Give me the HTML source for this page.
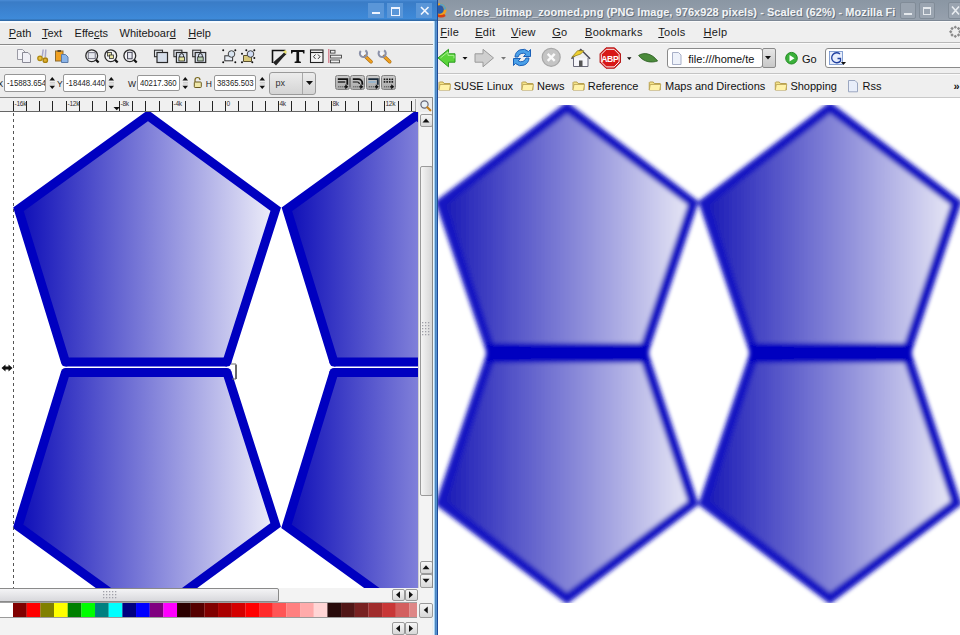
<!DOCTYPE html>
<html><head><meta charset="utf-8">
<style>
*{box-sizing:border-box}
html,body{margin:0;padding:0;width:960px;height:635px;overflow:hidden;background:#fff;font-family:"Liberation Sans",sans-serif;font-size:11px;color:#1a1a1a}
.a{position:absolute}
.t{position:absolute;white-space:nowrap}
.u{text-decoration:underline;text-underline-offset:1px}
.sep{position:absolute;height:1px;background:#8a8a8a}
.inp{position:absolute;background:#fff;border:1px solid #969696;border-radius:2px;overflow:hidden;white-space:nowrap}
.btn{position:absolute;border:1px solid #8f8f8f;border-radius:2px;background:linear-gradient(#f4f4f4,#dedede)}
svg{position:absolute;overflow:visible}
</style></head><body>

<div class="a" style="left:0;top:0;width:438px;height:635px;background:#ececec;overflow:hidden">
<div class="a" style="left:0;top:0;width:438px;height:21px;background:linear-gradient(#4b8cd6 0,#3a7cc6 2px,#3c84d2 12px,#3e8ad9 19px,#2f6aa8 20px,#2f6aa8 21px)"></div>
<div class="a" style="left:368px;top:3px;width:16px;height:15px;background:#5a96d8"></div>
<div class="a" style="left:387px;top:3px;width:16px;height:15px;background:#5a96d8"></div>
<div class="a" style="left:416px;top:3px;width:16px;height:15px;background:#5a96d8"></div>
<div class="a" style="left:372px;top:12px;width:8px;height:2px;background:#eef4ff"></div>
<div class="a" style="left:391px;top:7px;width:8.5px;height:8.5px;border:1.2px solid #eef4ff;border-top-width:2px"></div>
<svg style="left:420px;top:6px" width="9" height="9"><path d="M1 1L8.5 8.5M8.5 1L1 8.5" stroke="#f4f8ff" stroke-width="1.6"/></svg>
<div class="a" style="left:0;top:21px;width:434px;height:2px;background:#f7fbff"></div>
<div class="t " style="left:8.75px;top:28.44px;font-size:11px;line-height:11px;"><span class="u">P</span>ath</div>
<div class="t " style="left:41.9px;top:28.44px;font-size:11px;line-height:11px;"><span class="u">T</span>ext</div>
<div class="t " style="left:74.6px;top:28.44px;font-size:11px;line-height:11px;">Effe<span class="u">c</span>ts</div>
<div class="t " style="left:119.5px;top:28.44px;font-size:11px;line-height:11px;">Whiteboar<span class="u">d</span></div>
<div class="t " style="left:188.2px;top:28.44px;font-size:11px;line-height:11px;"><span class="u">H</span>elp</div>
<div class="sep" style="left:0;top:44px;width:434px"></div>
<div class="a" style="left:0;top:45px;width:434px;height:1px;background:#fafafa"></div>
<div class="sep" style="left:0;top:67px;width:434px"></div>
<div class="a" style="left:0;top:68px;width:434px;height:1px;background:#fafafa"></div>
<div class="sep" style="left:0;top:97px;width:434px"></div>
<svg style="left:16px;top:48px" width="16" height="16" viewBox="16 48 16 16"><path d="M17.5 49.5h5l2.5 2.5v7.5h-7.5z" fill="#f4f4f8" stroke="#9a9aa4"/><path d="M22.5 52.5h5.5l2.5 2.5v7.5h-8z" fill="#f0f0f6" stroke="#8a8a96"/></svg>
<svg style="left:35px;top:48px" width="16" height="16" viewBox="35 48 16 16"><path d="M43.2 49.5l-1 7M45.8 49.5l-.5 7.5" stroke="#a8a8c8" stroke-width="1.5"/><circle cx="40" cy="58.3" r="2.2" fill="#e8c040" stroke="#b08a10" stroke-width="1.3"/><circle cx="45.3" cy="60.2" r="2.2" fill="#e0b030" stroke="#a88010" stroke-width="1.3"/></svg>
<svg style="left:54px;top:48px" width="16" height="16" viewBox="54 48 16 16"><rect x="55.5" y="51" width="7.5" height="10" fill="#f0a020" stroke="#8a6a30"/><rect x="57.5" y="50" width="3.5" height="2" fill="#5a4a30"/><path d="M61.5 54.5h4l2.5 2.5v5.5h-6.5z" fill="#8ab4e8" stroke="#5a7aa8"/></svg>
<svg style="left:84px;top:47px" width="18" height="18" viewBox="84 47 18 18"><circle cx="91.7" cy="55.7" r="5.9" fill="#f4f4f6" stroke="#2a2a2a" stroke-width="1.3"/><rect x="88.2" y="52.7" width="7" height="6" fill="#e6e8ee" stroke="#556" stroke-width=".8"/><path d="M96.0 59.9l2.6 2.6" stroke="#111" stroke-width="2.2"/></svg>
<svg style="left:103px;top:47px" width="18" height="18" viewBox="103 47 18 18"><circle cx="110.75" cy="55.7" r="5.9" fill="#f4f4f6" stroke="#2a2a2a" stroke-width="1.3"/><rect x="107.5" y="52.5" width="4" height="3.5" fill="#e8e4b0" stroke="#333" stroke-width=".8"/><rect x="109.5" y="55" width="4" height="3.5" fill="#e8e4a0" stroke="#333" stroke-width=".8"/><path d="M115.05 59.9l2.6 2.6" stroke="#111" stroke-width="2.2"/></svg>
<svg style="left:122px;top:47px" width="18" height="18" viewBox="122 47 18 18"><circle cx="129.8" cy="55.7" r="5.9" fill="#f4f4f6" stroke="#2a2a2a" stroke-width="1.3"/><rect x="127.6" y="52.3" width="4.5" height="6.5" fill="#e8eaf2" stroke="#334" stroke-width=".9"/><path d="M134.10000000000002 59.9l2.6 2.6" stroke="#111" stroke-width="2.2"/></svg>
<svg style="left:153px;top:48px" width="17" height="17" viewBox="153 48 17 17"><rect x="154.5" y="50.2" width="8" height="6.5" fill="#e6eaf0" stroke="#333" stroke-width="1.1"/><rect x="157" y="52.5" width="10.5" height="10" fill="#d6deea" stroke="#2a2a2a" stroke-width="1.2"/></svg>
<svg style="left:172px;top:48px" width="17" height="17" viewBox="172 48 17 17"><rect x="173.9" y="50.2" width="8" height="6.5" fill="#e6eaf0" stroke="#333" stroke-width="1.1"/><rect x="176.4" y="52.5" width="10.5" height="10" fill="#d6deea" stroke="#2a2a2a" stroke-width="1.2"/><path d="M179.70000000000002 57v-1.5a1.9 1.9 0 0 1 3.8 0v1.5" fill="none" stroke="#222" stroke-width="1"/><rect x="178.9" y="57" width="5.5" height="4" fill="#e6e6a0" stroke="#222" stroke-width=".8"/></svg>
<svg style="left:191px;top:48px" width="17" height="17" viewBox="191 48 17 17"><rect x="192.7" y="50.2" width="8" height="6.5" fill="#e6eaf0" stroke="#333" stroke-width="1.1"/><rect x="195.2" y="52.5" width="10.5" height="10" fill="#d6deea" stroke="#2a2a2a" stroke-width="1.2"/><path d="M198.5 57v-1.5a1.9 1.9 0 0 1 3.8 0v1.5" fill="none" stroke="#222" stroke-width="1"/><rect x="197.7" y="57" width="5.5" height="4" fill="#b8d0b0" stroke="#222" stroke-width=".8"/></svg>
<svg style="left:221px;top:48px" width="17" height="17" viewBox="221 48 17 17"><circle cx="223.2" cy="50.2" r="1" fill="#111"/><circle cx="235.3" cy="50.2" r="1" fill="#111"/><circle cx="223.2" cy="62.25" r="1" fill="#111"/><circle cx="235.3" cy="62.25" r="1" fill="#111"/><rect x="224.8" y="55.8" width="7.8" height="5" fill="#e6ecf4" stroke="#333" stroke-width="1"/><circle cx="231.5" cy="54" r="3.3" fill="#d8e4f0" stroke="#444" stroke-width="1"/></svg>
<svg style="left:240px;top:48px" width="17" height="17" viewBox="240 48 17 17"><path d="M243.5 55.5h8v6h-8z" fill="#d8c878" stroke="#5a5030" stroke-width="1"/><circle cx="250.5" cy="54" r="3.3" fill="#d0dcf4" stroke="#444" stroke-width="1"/><circle cx="246.3" cy="50.2" r="1" fill="#111"/><circle cx="254.3" cy="50.2" r="1" fill="#111"/><circle cx="242" cy="53.75" r="1" fill="#111"/><circle cx="254.3" cy="58" r="1" fill="#111"/><circle cx="242" cy="62.25" r="1" fill="#111"/><circle cx="252.3" cy="62.25" r="1" fill="#111"/></svg>
<svg style="left:271px;top:48px" width="17" height="17" viewBox="271 48 17 17"><path d="M272.5 63V50.5h13" fill="none" stroke="#111" stroke-width="1.6"/><path d="M273 62.5l8.5-7.5 3-3 2 2-3 3-7.5 8.5z" fill="#222"/><path d="M283 51.5l2.5-1.5 1.5 2-1.5 2z" fill="#e8e070"/></svg>
<svg style="left:290px;top:48px" width="16" height="16" viewBox="290 48 16 16"><path d="M291 50h13.5v3.6h-1.2l-.6-1.6h-3.6v9.2l1.8.5V63h-6.3v-1.3l1.8-.5v-9.2h-3.6l-.6 1.6H291z" fill="#111"/></svg>
<svg style="left:309px;top:48px" width="16" height="16" viewBox="309 48 16 16"><rect x="310.5" y="50" width="12.5" height="12.5" fill="#f4f4f4" stroke="#222" stroke-width="1.1"/><path d="M310.5 52.5h12.5" stroke="#222" stroke-width="1.1"/><path d="M315.5 54.5l-2 2.2 2 2.2M318 54.5l2 2.2-2 2.2" fill="none" stroke="#333" stroke-width="1"/></svg>
<svg style="left:327px;top:48px" width="16" height="16" viewBox="327 48 16 16"><path d="M328.8 49v14" stroke="#d07080" stroke-width="1.2"/><rect x="330.5" y="50.3" width="4.5" height="2.8" fill="#eee" stroke="#444" stroke-width=".9"/><rect x="330.5" y="55.2" width="11" height="2.8" fill="#eee" stroke="#444" stroke-width=".9"/><rect x="330.5" y="60" width="9" height="2.8" fill="#eee" stroke="#444" stroke-width=".9"/></svg>
<svg style="left:357px;top:47px" width="18" height="18" viewBox="357 47 18 18"><path d="M365.5 56.5l5.5 5.2" stroke="#a86a10" stroke-width="3.6" stroke-linecap="round"/><path d="M365.5 56.5l5.5 5.2" stroke="#f0a020" stroke-width="2.4" stroke-linecap="round"/><path d="M360.8 51a3.6 3.6 0 1 0 4.6 -0.6" fill="none" stroke="#8a90a8" stroke-width="2"/><circle cx="363" cy="53.7" r="1.8" fill="#f4f6fc"/></svg>
<svg style="left:376px;top:47px" width="18" height="18" viewBox="376 47 18 18"><path d="M384.2 56.5l5.5 5.2" stroke="#a86a10" stroke-width="3.6" stroke-linecap="round"/><path d="M384.2 56.5l5.5 5.2" stroke="#f0a020" stroke-width="2.4" stroke-linecap="round"/><path d="M379.5 51a3.6 3.6 0 1 0 4.6 -0.6" fill="none" stroke="#8a90a8" stroke-width="2"/><circle cx="381.7" cy="53.7" r="1.8" fill="#f4f6fc"/></svg>
<div class="t " style="left:-2.5px;top:80.30px;font-size:8.5px;line-height:8.5px;color:#222">X</div>
<div class="inp" style="left:4px;top:74px;width:42px;height:18px"><div class="t" style="left:2px;top:2.48px;font-size:9px;line-height:12px;transform:scaleX(.86);transform-origin:0 0;color:#222">-15883.654</div></div>
<svg style="left:48.5px;top:76px" width="8" height="14" viewBox="48.5 76 8 14"><path d="M49.0 80.5l2.75-3.5 2.75 3.5z" fill="#111"/><path d="M49.0 85.8l2.75 3.2 2.75-3.2z" fill="#111"/><path d="M49.5 82.5h5M49.5 84h5" stroke="#c8c8c8" stroke-width=".8"/></svg>
<div class="t " style="left:56.9px;top:80.30px;font-size:8.5px;line-height:8.5px;color:#222">Y</div>
<div class="inp" style="left:63px;top:74px;width:43px;height:18px"><div class="t" style="left:2px;top:2.48px;font-size:9px;line-height:12px;transform:scaleX(.86);transform-origin:0 0;color:#222">-18448.440</div></div>
<svg style="left:108px;top:76px" width="8" height="14" viewBox="108 76 8 14"><path d="M108.5 80.5l2.75-3.5 2.75 3.5z" fill="#111"/><path d="M108.5 85.8l2.75 3.2 2.75-3.2z" fill="#111"/><path d="M109 82.5h5M109 84h5" stroke="#c8c8c8" stroke-width=".8"/></svg>
<div class="t " style="left:128px;top:80.30px;font-size:8.5px;line-height:8.5px;color:#222">W</div>
<div class="inp" style="left:137px;top:75px;width:43px;height:16px"><div class="t" style="left:2px;top:1.48px;font-size:9px;line-height:12px;transform:scaleX(.86);transform-origin:0 0;color:#222">40217.360</div></div>
<svg style="left:182px;top:76px" width="8" height="14" viewBox="182 76 8 14"><path d="M182.5 80.5l2.75-3.5 2.75 3.5z" fill="#111"/><path d="M182.5 85.8l2.75 3.2 2.75-3.2z" fill="#111"/><path d="M183 82.5h5M183 84h5" stroke="#c8c8c8" stroke-width=".8"/></svg>
<svg style="left:193px;top:77px" width="10" height="12" viewBox="193 77 10 12"><path d="M195 82v-2a2.5 2.5 0 0 1 5 0" fill="none" stroke="#7a6a20" stroke-width="1.2"/><rect x="194.3" y="82" width="7" height="5.5" rx=".8" fill="#f0e8a8" stroke="#6a5a20"/></svg>
<div class="t " style="left:205.8px;top:80.30px;font-size:8.5px;line-height:8.5px;color:#222">H</div>
<div class="inp" style="left:214px;top:75px;width:42px;height:16px"><div class="t" style="left:2px;top:1.48px;font-size:9px;line-height:12px;transform:scaleX(.86);transform-origin:0 0;color:#222">38365.503</div></div>
<svg style="left:258.5px;top:76px" width="8" height="14" viewBox="258.5 76 8 14"><path d="M259.0 80.5l2.75-3.5 2.75 3.5z" fill="#111"/><path d="M259.0 85.8l2.75 3.2 2.75-3.2z" fill="#111"/><path d="M259.5 82.5h5M259.5 84h5" stroke="#c8c8c8" stroke-width=".8"/></svg>
<div class="btn" style="left:269px;top:72px;width:47px;height:23px;background:linear-gradient(#ececec,#d4d4d4);border-color:#9a9a9a;border-radius:3px"></div>
<div class="a" style="left:302px;top:73px;width:1px;height:21px;background:#a8a8a8"></div>
<div class="t " style="left:275.5px;top:78.68px;font-size:9px;line-height:9px;color:#333">px</div>
<svg style="left:305px;top:80px" width="10" height="6" viewBox="305 80 10 6"><path d="M306 81h7l-3.5 4z" fill="#111"/></svg>
<div class="a" style="left:335.3px;top:75.3px;width:14.5px;height:15px;border:1px solid #808080;border-radius:2.5px;background:linear-gradient(#cacaca,#aaaaaa)"></div>
<svg style="left:335px;top:76px" width="16" height="15" viewBox="335 76 16 15"><path d="M337.8 79.2h9.5v5.5" fill="none" stroke="#111" stroke-width="1.8"/><path d="M337.8 82h7.5" stroke="#111" stroke-width="1.3"/><path d="M338.3 86.8h6" stroke="#333" stroke-width="1" stroke-dasharray="1 1"/><path d="M344.3 86.8h1.5" stroke="#111" stroke-width="1.4"/><path d="M345.3 84.3l3 2.5-3 2.5z" fill="#111"/></svg>
<div class="a" style="left:350.3px;top:75.3px;width:14.5px;height:15px;border:1px solid #808080;border-radius:2.5px;background:linear-gradient(#cacaca,#aaaaaa)"></div>
<svg style="left:350px;top:76px" width="16" height="15" viewBox="350 76 16 15"><path d="M352.8 79.2h5.5a4 4 0 0 1 4 4v1.5" fill="none" stroke="#111" stroke-width="1.8"/><path d="M352.8 82h4.5a2 2 0 0 1 2 2" fill="none" stroke="#111" stroke-width="1.2"/><path d="M353.3 86.8h6" stroke="#333" stroke-width="1" stroke-dasharray="1 1"/><path d="M359.3 86.8h1.5" stroke="#111" stroke-width="1.4"/><path d="M360.3 84.3l3 2.5-3 2.5z" fill="#111"/></svg>
<div class="a" style="left:365.8px;top:75.3px;width:14.5px;height:15px;border:1px solid #808080;border-radius:2.5px;background:linear-gradient(#cacaca,#aaaaaa)"></div>
<svg style="left:365px;top:76px" width="16" height="15" viewBox="365 76 16 15"><path d="M368.3 79.2h9.5v5.5" fill="none" stroke="#1a2a3a" stroke-width="1.8"/><path d="M368.3 82h7.5" stroke="#8ab0d0" stroke-width="1.5"/><path d="M368.8 86.8h6" stroke="#333" stroke-width="1" stroke-dasharray="1 1"/><path d="M374.8 86.8h1.5" stroke="#111" stroke-width="1.4"/><path d="M375.8 84.3l3 2.5-3 2.5z" fill="#111"/></svg>
<div class="a" style="left:381.2px;top:75.3px;width:14.5px;height:15px;border:1px solid #808080;border-radius:2.5px;background:linear-gradient(#cacaca,#aaaaaa)"></div>
<svg style="left:381px;top:76px" width="16" height="15" viewBox="381 76 16 15"><rect x="383.7" y="78.5" width="1.6" height="1.6" fill="#111"/><rect x="383.7" y="81.1" width="1.6" height="1.6" fill="#111"/><rect x="386.3" y="78.5" width="1.6" height="1.6" fill="#111"/><rect x="386.3" y="81.1" width="1.6" height="1.6" fill="#111"/><rect x="388.9" y="78.5" width="1.6" height="1.6" fill="#111"/><rect x="388.9" y="81.1" width="1.6" height="1.6" fill="#111"/><rect x="391.5" y="78.5" width="1.6" height="1.6" fill="#111"/><rect x="391.5" y="81.1" width="1.6" height="1.6" fill="#111"/><path d="M384.2 86.8h6" stroke="#333" stroke-width="1" stroke-dasharray="1 1"/><path d="M390.2 86.8h1.5" stroke="#111" stroke-width="1.4"/><path d="M391.2 84.3l3 2.5-3 2.5z" fill="#111"/></svg>
<div class="a" style="left:0;top:98px;width:418px;height:14px;background:#f0f0f0"></div>
<svg style="left:0px;top:98px" width="418" height="14" viewBox="0 98 418 14"><rect x="13" y="101" width="1" height="10.5" fill="#222"/><rect x="26" y="101" width="1" height="10.5" fill="#222"/><rect x="39" y="101" width="1" height="10.5" fill="#222"/><rect x="52" y="101" width="1" height="10.5" fill="#222"/><rect x="66" y="101" width="1" height="10.5" fill="#222"/><rect x="79" y="101" width="1" height="10.5" fill="#222"/><rect x="92" y="101" width="1" height="10.5" fill="#222"/><rect x="106" y="101" width="1" height="10.5" fill="#222"/><rect x="119" y="101" width="1" height="10.5" fill="#222"/><rect x="132" y="101" width="1" height="10.5" fill="#222"/><rect x="145" y="101" width="1" height="10.5" fill="#222"/><rect x="159" y="101" width="1" height="10.5" fill="#222"/><rect x="172" y="101" width="1" height="10.5" fill="#222"/><rect x="185" y="101" width="1" height="10.5" fill="#222"/><rect x="199" y="101" width="1" height="10.5" fill="#222"/><rect x="212" y="101" width="1" height="10.5" fill="#222"/><rect x="225" y="101" width="1" height="10.5" fill="#222"/><rect x="238" y="101" width="1" height="10.5" fill="#222"/><rect x="252" y="101" width="1" height="10.5" fill="#222"/><rect x="265" y="101" width="1" height="10.5" fill="#222"/><rect x="278" y="101" width="1" height="10.5" fill="#222"/><rect x="291" y="101" width="1" height="10.5" fill="#222"/><rect x="305" y="101" width="1" height="10.5" fill="#222"/><rect x="318" y="101" width="1" height="10.5" fill="#222"/><rect x="331" y="101" width="1" height="10.5" fill="#222"/><rect x="345" y="101" width="1" height="10.5" fill="#222"/><rect x="358" y="101" width="1" height="10.5" fill="#222"/><rect x="371" y="101" width="1" height="10.5" fill="#222"/><rect x="384" y="101" width="1" height="10.5" fill="#222"/><rect x="398" y="101" width="1" height="10.5" fill="#222"/><rect x="411" y="101" width="1" height="10.5" fill="#222"/><rect x="0" y="111" width="416" height="1" fill="#666"/><rect x="415" y="99" width="1" height="12" fill="#aaa"/></svg>
<div class="t" style="left:14.5px;top:100.3px;font-size:6.6px;line-height:8px;color:#333;letter-spacing:-.3px">-16k</div><div class="t" style="left:67.5px;top:100.3px;font-size:6.6px;line-height:8px;color:#333;letter-spacing:-.3px">-12k</div><div class="t" style="left:120.5px;top:100.3px;font-size:6.6px;line-height:8px;color:#333;letter-spacing:-.3px">-8k</div><div class="t" style="left:173.5px;top:100.3px;font-size:6.6px;line-height:8px;color:#333;letter-spacing:-.3px">-4k</div><div class="t" style="left:226.5px;top:100.3px;font-size:6.6px;line-height:8px;color:#333;letter-spacing:-.3px">0</div><div class="t" style="left:279.5px;top:100.3px;font-size:6.6px;line-height:8px;color:#333;letter-spacing:-.3px">4k</div><div class="t" style="left:332.5px;top:100.3px;font-size:6.6px;line-height:8px;color:#333;letter-spacing:-.3px">8k</div><div class="t" style="left:385.5px;top:100.3px;font-size:6.6px;line-height:8px;color:#333;letter-spacing:-.3px">12k</div>
<svg style="left:112px;top:105px" width="10" height="6" viewBox="112 105 10 6"><path d="M113.5 107h6.5l-3.25 3.3z" fill="#111"/></svg>
<svg style="left:419px;top:99px" width="14" height="13" viewBox="419 99 14 13"><circle cx="424.5" cy="104.5" r="3.6" fill="#e8eef4" stroke="#667" stroke-width="1.2"/><path d="M427.3 107.3l3 3" stroke="#c8801a" stroke-width="2.2" stroke-linecap="round"/></svg>
<div class="a" style="left:0;top:112px;width:418px;height:476px;background:#fff;overflow:hidden">
<svg width="418" height="476" viewBox="0 112 418 476" style="left:0;top:0">
<defs>
<linearGradient id="g1" gradientUnits="userSpaceOnUse" x1="13" y1="0" x2="281" y2="0">
<stop offset="0" stop-color="#0808b6"/><stop offset="1" stop-color="#f4f4fb"/></linearGradient>
<g id="pair"><polygon points="147.98,115.57 275.73,209.21 226.91,362.0 65.52,362.0 18.45,209.26" fill="url(#g1)"/><polyline points="65.52,362.0 18.45,209.26 147.98,115.57 275.73,209.21 226.91,362.0" fill="none" stroke="#0000c0" stroke-width="9" stroke-linejoin="miter"/><polyline points="226.91,362.0 65.52,362.0" fill="none" stroke="#0000c0" stroke-width="9"/><circle cx="226.91" cy="362.0" r="4.5" fill="#0000c0"/><circle cx="65.52" cy="362.0" r="4.5" fill="#0000c0"/><polygon points="146.81,619.39 275.65,524.95 226.91,372.4 65.52,372.4 18.1,526.28" fill="url(#g1)"/><polyline points="65.52,372.4 18.1,526.28 146.81,619.39 275.65,524.95 226.91,372.4" fill="none" stroke="#0000c0" stroke-width="9" stroke-linejoin="miter"/><polyline points="226.91,372.4 65.52,372.4" fill="none" stroke="#0000c0" stroke-width="9"/><circle cx="226.91" cy="372.4" r="4.5" fill="#0000c0"/><circle cx="65.52" cy="372.4" r="4.5" fill="#0000c0"/></g>
</defs>

<use href="#pair"/><use href="#pair" transform="translate(268.4,0)"/>
<path d="M13.5 113V588" stroke="#555" stroke-width="1" stroke-dasharray="3 3"/>
<path d="M231 364h5v15h-4" fill="none" stroke="#6a6a6a" stroke-width="1"/><path d="M236 365v14" stroke="#6a6a6a" stroke-width="2"/>
<path d="M1.5 368l4-3.5v2h3v-2l4 3.5-4 3.5v-2h-3v2z" fill="#111"/>
</svg>
</div>
<div class="a" style="left:418px;top:112px;width:16px;height:476px;background:#f3f3f3;border-left:1px solid #d0d0d0"></div>
<div class="btn" style="left:419.5px;top:114px;width:13px;height:13px;border-color:#9a9a9a;background:linear-gradient(#f6f6f6,#d8d8d8)"></div>
<svg style="left:419px;top:114px" width="14" height="14" viewBox="419 114 14 14"><path d="M422.5 122.5h7l-3.5-4z" fill="#111"/></svg>
<div class="btn" style="left:419.5px;top:165.5px;width:13.5px;height:330px;border-color:#9a9a9a;background:linear-gradient(90deg,#f4f4f4,#d6d6d6)"></div>
<svg style="left:420px;top:319px" width="12" height="20" viewBox="420 319 12 20"><rect x="422" y="322" width="1.3" height="1.3" fill="#a0a0a8"/><rect x="422" y="325" width="1.3" height="1.3" fill="#a0a0a8"/><rect x="422" y="328" width="1.3" height="1.3" fill="#a0a0a8"/><rect x="422" y="331" width="1.3" height="1.3" fill="#a0a0a8"/><rect x="422" y="334" width="1.3" height="1.3" fill="#a0a0a8"/><rect x="425" y="322" width="1.3" height="1.3" fill="#a0a0a8"/><rect x="425" y="325" width="1.3" height="1.3" fill="#a0a0a8"/><rect x="425" y="328" width="1.3" height="1.3" fill="#a0a0a8"/><rect x="425" y="331" width="1.3" height="1.3" fill="#a0a0a8"/><rect x="425" y="334" width="1.3" height="1.3" fill="#a0a0a8"/><rect x="428" y="322" width="1.3" height="1.3" fill="#a0a0a8"/><rect x="428" y="325" width="1.3" height="1.3" fill="#a0a0a8"/><rect x="428" y="328" width="1.3" height="1.3" fill="#a0a0a8"/><rect x="428" y="331" width="1.3" height="1.3" fill="#a0a0a8"/><rect x="428" y="334" width="1.3" height="1.3" fill="#a0a0a8"/></svg>
<div class="btn" style="left:419.5px;top:560.5px;width:13px;height:13.5px;border-color:#9a9a9a;background:linear-gradient(#f6f6f6,#d8d8d8)"></div>
<svg style="left:419px;top:560px" width="14" height="14.5" viewBox="419 560 14 14.5"><path d="M422.5 569.25h7l-3.5-4z" fill="#111"/></svg>
<div class="btn" style="left:419.5px;top:574px;width:13px;height:13.5px;border-color:#9a9a9a;background:linear-gradient(#f6f6f6,#d8d8d8)"></div>
<svg style="left:419px;top:574px" width="14" height="14.5" viewBox="419 574 14 14.5"><path d="M422.5 578.75h7l-3.5 4z" fill="#111"/></svg>
<div class="a" style="left:0;top:588px;width:434px;height:14px;background:#f3f3f3"></div>
<div class="btn" style="left:-2px;top:588px;width:281px;height:13.5px;border-color:#8a8a8a;background:linear-gradient(#f4f4f6,#d8d8dc)"></div>
<svg style="left:100px;top:589px" width="22" height="12" viewBox="100 589 22 12"><rect x="103" y="591" width="1.3" height="1.3" fill="#a0a0a8"/><rect x="103" y="594" width="1.3" height="1.3" fill="#a0a0a8"/><rect x="103" y="597" width="1.3" height="1.3" fill="#a0a0a8"/><rect x="106" y="591" width="1.3" height="1.3" fill="#a0a0a8"/><rect x="106" y="594" width="1.3" height="1.3" fill="#a0a0a8"/><rect x="106" y="597" width="1.3" height="1.3" fill="#a0a0a8"/><rect x="109" y="591" width="1.3" height="1.3" fill="#a0a0a8"/><rect x="109" y="594" width="1.3" height="1.3" fill="#a0a0a8"/><rect x="109" y="597" width="1.3" height="1.3" fill="#a0a0a8"/><rect x="112" y="591" width="1.3" height="1.3" fill="#a0a0a8"/><rect x="112" y="594" width="1.3" height="1.3" fill="#a0a0a8"/><rect x="112" y="597" width="1.3" height="1.3" fill="#a0a0a8"/><rect x="115" y="591" width="1.3" height="1.3" fill="#a0a0a8"/><rect x="115" y="594" width="1.3" height="1.3" fill="#a0a0a8"/><rect x="115" y="597" width="1.3" height="1.3" fill="#a0a0a8"/></svg>
<div class="btn" style="left:391.5px;top:588.5px;width:13px;height:12.5px;border-color:#9a9a9a;background:linear-gradient(#f6f6f6,#d8d8d8)"></div>
<svg style="left:391px;top:588px" width="14" height="13.5" viewBox="391 588 14 13.5"><path d="M400.0 591.25v7l-4-3.5z" fill="#111"/></svg>
<div class="btn" style="left:404.5px;top:588.5px;width:13px;height:12.5px;border-color:#9a9a9a;background:linear-gradient(#f6f6f6,#d8d8d8)"></div>
<svg style="left:404px;top:588px" width="14" height="13.5" viewBox="404 588 14 13.5"><path d="M409.0 591.25v7l4-3.5z" fill="#111"/></svg>
<div class="a" style="left:0;top:602px;width:418px;height:16px;background:#fff;border-top:1px solid #a0a0a0;border-bottom:1px solid #9a9a9a"></div>
<svg style="left:0px;top:602px" width="418" height="16" viewBox="0 602 418 16"><rect x="13.00" y="603" width="13.8" height="14" fill="#800000"/><rect x="26.67" y="603" width="13.8" height="14" fill="#ff0000"/><rect x="40.34" y="603" width="13.8" height="14" fill="#808000"/><rect x="54.01" y="603" width="13.8" height="14" fill="#ffff00"/><rect x="67.68" y="603" width="13.8" height="14" fill="#008000"/><rect x="81.35" y="603" width="13.8" height="14" fill="#00ff00"/><rect x="95.02" y="603" width="13.8" height="14" fill="#008080"/><rect x="108.69" y="603" width="13.8" height="14" fill="#00ffff"/><rect x="122.36" y="603" width="13.8" height="14" fill="#000080"/><rect x="136.03" y="603" width="13.8" height="14" fill="#0000ff"/><rect x="149.70" y="603" width="13.8" height="14" fill="#800080"/><rect x="163.37" y="603" width="13.8" height="14" fill="#ff00ff"/><rect x="177.04" y="603" width="13.8" height="14" fill="#2b0000"/><rect x="190.71" y="603" width="13.8" height="14" fill="#550000"/><rect x="204.38" y="603" width="13.8" height="14" fill="#800000"/><rect x="218.05" y="603" width="13.8" height="14" fill="#aa0000"/><rect x="231.72" y="603" width="13.8" height="14" fill="#d40000"/><rect x="245.39" y="603" width="13.8" height="14" fill="#ff0000"/><rect x="259.06" y="603" width="13.8" height="14" fill="#ff2a2a"/><rect x="272.73" y="603" width="13.8" height="14" fill="#ff5555"/><rect x="286.40" y="603" width="13.8" height="14" fill="#ff8080"/><rect x="300.07" y="603" width="13.8" height="14" fill="#ffaaaa"/><rect x="313.74" y="603" width="13.8" height="14" fill="#ffd5d5"/><rect x="327.41" y="603" width="13.8" height="14" fill="#280b0b"/><rect x="341.08" y="603" width="13.8" height="14" fill="#501616"/><rect x="354.75" y="603" width="13.8" height="14" fill="#782121"/><rect x="368.42" y="603" width="13.8" height="14" fill="#a02c2c"/><rect x="382.09" y="603" width="13.8" height="14" fill="#c83737"/><rect x="395.76" y="603" width="13.8" height="14" fill="#d35f5f"/><rect x="409.43" y="603" width="13.8" height="14" fill="#de8787"/></svg>
<div class="a" style="left:417px;top:602px;width:17px;height:16px;background:#f3f3f3"></div>
<div class="btn" style="left:419px;top:602.5px;width:13.5px;height:15px;border-color:#9a9a9a;background:linear-gradient(#f6f6f6,#d8d8d8)"></div>
<svg style="left:419px;top:602px" width="14.5" height="16" viewBox="419 602 14.5 16"><path d="M427.75 606.5v7l-4-3.5z" fill="#111"/></svg>
<div class="a" style="left:0;top:618px;width:432px;height:17px;background:#f3f3f3"></div>
<div class="btn" style="left:391.5px;top:622px;width:13px;height:13px;border-color:#9a9a9a;background:linear-gradient(#f6f6f6,#d8d8d8)"></div>
<svg style="left:391px;top:622px" width="14" height="14" viewBox="391 622 14 14"><path d="M400.0 625.0v7l-4-3.5z" fill="#111"/></svg>
<div class="btn" style="left:404.5px;top:622px;width:13px;height:13px;border-color:#9a9a9a;background:linear-gradient(#f6f6f6,#d8d8d8)"></div>
<svg style="left:404px;top:622px" width="14" height="14" viewBox="404 622 14 14"><path d="M409.0 625.0v7l4-3.5z" fill="#111"/></svg>
<div class="a" style="left:432px;top:98px;width:1px;height:490px;background:#8a8a8a"></div>
<div class="a" style="left:433px;top:21px;width:5px;height:614px;background:linear-gradient(90deg,#e6f6ff 0,#e6f6ff 1px,#a4ccf0 1px,#a4ccf0 2px,#4a86bc 2px,#4a86bc 3px,#5690d0 3px,#5690d0 4px,#1e4c98 4px)"></div>
<div class="a" style="left:437px;top:0;width:1px;height:21px;background:#1e4c98"></div>
</div>
<div class="a" style="left:438px;top:0;width:522px;height:635px;background:#efefef"></div>
<div class="a" style="left:438px;top:0;width:522px;height:21px;background:linear-gradient(#8a96a3,#909ba8 10px,#97a1ad)"></div>
<div class="a" style="left:438px;top:20px;width:522px;height:1px;background:#7c8794"></div>
<div class="a" style="left:438px;top:21px;width:522px;height:1px;background:#fbfbfb"></div>
<svg style="left:438px;top:2px;overflow:hidden" width="10" height="16" viewBox="438 2 10 16"><circle cx="440" cy="9.8" r="6.6" fill="#f0a020"/><path d="M440 3.2a6.6 6.6 0 0 1 6.6 6.6h-2.5a4.1 4.1 0 0 0-4.1-4.1z" fill="#60a0c0"/><circle cx="439.5" cy="9.5" r="4.3" fill="#2a5aa8"/><path d="M436 14a6.6 6.6 0 0 0 9 1" stroke="#d84010" stroke-width="2.5" fill="none"/></svg>
<div class="t " style="left:454.3px;top:7.29px;font-size:11px;line-height:11px;font-weight:bold;color:#f2f4f6;text-shadow:1px 1px 0 #66707c;letter-spacing:.05px">clones_bitmap_zoomed.png (PNG Image, 976x928 pixels) - Scaled (62%) - Mozilla Fi</div>
<div class="a" style="left:896px;top:0;width:64px;height:20px;background:linear-gradient(#8a96a3,#909ba8 10px,#97a1ad)"></div>
<div class="a" style="left:899.6px;top:2px;width:16.649999999999977px;height:17px;background:#9aa4b0;border:1px solid #818c98;border-radius:2px"></div>
<div class="a" style="left:918.75px;top:2px;width:16.649999999999977px;height:17px;background:#9aa4b0;border:1px solid #818c98;border-radius:2px"></div>
<div class="a" style="left:948px;top:2px;width:17px;height:17px;background:#9aa4b0;border:1px solid #818c98;border-radius:2px"></div>
<div class="a" style="left:904px;top:13px;width:8px;height:1.5px;background:#e4e8ec"></div>
<div class="a" style="left:923px;top:7px;width:8px;height:8px;border:1px solid #e4e8ec;border-top-width:2px"></div>
<svg style="left:950px;top:5px" width="12" height="12" viewBox="950 5 12 12"><path d="M952 6.5l7 8M959 6.5l-7 8" stroke="#e8ecf0" stroke-width="1.6"/></svg>
<div class="t " style="left:440.2px;top:27.49px;font-size:11px;line-height:11px;letter-spacing:.3px"><span class="u">F</span>ile</div>
<div class="t " style="left:475.2px;top:27.49px;font-size:11px;line-height:11px;letter-spacing:.3px"><span class="u">E</span>dit</div>
<div class="t " style="left:511px;top:27.49px;font-size:11px;line-height:11px;letter-spacing:.3px"><span class="u">V</span>iew</div>
<div class="t " style="left:552.25px;top:27.49px;font-size:11px;line-height:11px;letter-spacing:.3px"><span class="u">G</span>o</div>
<div class="t " style="left:585px;top:27.49px;font-size:11px;line-height:11px;letter-spacing:.3px"><span class="u">B</span>ookmarks</div>
<div class="t " style="left:658.3px;top:27.49px;font-size:11px;line-height:11px;letter-spacing:.3px"><span class="u">T</span>ools</div>
<div class="t " style="left:703.5px;top:27.49px;font-size:11px;line-height:11px;letter-spacing:.3px"><span class="u">H</span>elp</div>
<svg style="left:946px;top:25px" width="14" height="14" viewBox="946 25 14 14"><rect x="958.70" y="30.55" width="2.4" height="2.4" transform="rotate(45 959.90 31.75)" fill="#8a8a8a"/><rect x="957.35" y="33.80" width="2.4" height="2.4" transform="rotate(45 958.55 35.00)" fill="#8a8a8a"/><rect x="954.10" y="35.15" width="2.4" height="2.4" transform="rotate(45 955.30 36.35)" fill="#8a8a8a"/><rect x="950.85" y="33.80" width="2.4" height="2.4" transform="rotate(45 952.05 35.00)" fill="#8a8a8a"/><rect x="949.50" y="30.55" width="2.4" height="2.4" transform="rotate(45 950.70 31.75)" fill="#8a8a8a"/><rect x="950.85" y="27.30" width="2.4" height="2.4" transform="rotate(45 952.05 28.50)" fill="#8a8a8a"/><rect x="954.10" y="25.95" width="2.4" height="2.4" transform="rotate(45 955.30 27.15)" fill="#8a8a8a"/><rect x="957.35" y="27.30" width="2.4" height="2.4" transform="rotate(45 958.55 28.50)" fill="#8a8a8a"/></svg>
<div class="a" style="left:438px;top:42px;width:522px;height:1px;background:#b8b8b8"></div>
<div class="a" style="left:438px;top:43px;width:522px;height:1px;background:#fafafa"></div>
<svg style="left:437px;top:48px" width="20" height="20" viewBox="437 48 20 20"><path d="M438 57.9l10.5-8.6v4.5h6.5v8.4h-6.5v4.6z" fill="#5ad43a" stroke="#2a9a20" stroke-width="1"/><path d="M440.5 57.9l7.5-6v3.5h6v3" fill="none" stroke="#a8f090" stroke-width="1"/></svg>
<svg style="left:461px;top:56px" width="8" height="5" viewBox="461 56 8 5"><path d="M462.5 57h5l-2.5 2.8z" fill="#111"/></svg>
<svg style="left:474px;top:48px" width="21" height="20" viewBox="474 48 21 20"><path d="M493.5 57.9l-10.5-8.6v4.5h-8v8.4h8v4.6z" fill="#cfcfcf" stroke="#9a9a9a" stroke-width="1"/></svg>
<svg style="left:500px;top:56px" width="8" height="5" viewBox="500 56 8 5"><path d="M501 57h5l-2.5 2.8z" fill="#777"/></svg>
<svg style="left:511px;top:47px" width="22" height="21" viewBox="511 47 22 21"><path d="M515 57a8 8 0 0 1 13.5-5.5l2-2v7h-7l2.3-2.3a5 5 0 0 0-7.8 2.8z" fill="#4aa0e8" stroke="#1a60b8" stroke-width="1"/><path d="M529 58a8 8 0 0 1-13.5 5.5l-2 2v-7h7l-2.3 2.3a5 5 0 0 0 7.8-2.8z" fill="#4aa0e8" stroke="#1a60b8" stroke-width="1"/></svg>
<svg style="left:541px;top:47px" width="21" height="21" viewBox="541 47 21 21"><circle cx="551.2" cy="57.3" r="9" fill="#c4c4c4" stroke="#a8a8a8" stroke-width="1.2"/><path d="M547.7 53.8l7 7M554.7 53.8l-7 7" stroke="#fafafa" stroke-width="2.4"/></svg>
<svg style="left:570px;top:47px" width="22" height="22" viewBox="570 47 22 22"><path d="M573.5 58v8.5h14.5V58" fill="#f6f6fa" stroke="#6a6a7a" stroke-width="1"/><path d="M571.5 58.8l9.3-9.3 9.3 9.3" fill="none" stroke="#4a4a5a" stroke-width="1.5"/><path d="M571.8 57.2l5.7-6.5h6.3l-2.9 3.2z" fill="#f0d030" stroke="#8a7a20" stroke-width=".7"/><rect x="579" y="60.5" width="3.5" height="6" fill="#555"/></svg>
<svg style="left:599px;top:47px" width="23" height="22" viewBox="599 47 23 22"><path d="M606 47.8h8.5l6 6v8.5l-6 6H606l-6-6v-8.5z" fill="#d81818" stroke="#a00" stroke-width=".8"/><path d="M606.3 49.3h7.8l5 5v7.6l-5 5h-7.8l-5-5v-7.6z" fill="none" stroke="#f8f8f8" stroke-width="1"/></svg>
<div class="t " style="left:601.3px;top:55.02px;font-size:8.6px;line-height:8.6px;font-weight:bold;color:#fff;letter-spacing:-.4px">ABP</div>
<svg style="left:626px;top:56px" width="8" height="5" viewBox="626 56 8 5"><path d="M627 57.3h4.5l-2.25 2.7z" fill="#111"/></svg>
<svg style="left:637px;top:52px" width="22" height="11" viewBox="637 52 22 11"><path d="M638.6 55.5c5-3.5 13-2.5 19 5.5-6 2-13.5 1.5-19-5.5z" fill="#4a8a3a" stroke="#2a5a20" stroke-width=".8"/></svg>
<div class="inp" style="left:666.5px;top:48.3px;width:96px;height:20px;border-color:#8a8a8a;border-radius:3px"></div>
<svg style="left:670px;top:51px" width="14" height="15" viewBox="670 51 14 15"><path d="M672.5 52.5h6l2.5 2.5v9.5h-8.5z" fill="#eef2fa" stroke="#a8b0c8" stroke-width="1"/></svg>
<div class="t " style="left:688.3px;top:54.19px;font-size:11px;line-height:11px;color:#111">file:///home/te</div>
<div class="btn" style="left:761.5px;top:48.3px;width:14px;height:20px;border-color:#8a8a8a;background:linear-gradient(#e6e6e6,#c8c8c8)"></div>
<svg style="left:763px;top:55px" width="10" height="6" viewBox="763 55 10 6"><path d="M765 56h6l-3 3.5z" fill="#111"/></svg>
<svg style="left:784px;top:51px" width="15" height="15" viewBox="784 51 15 15"><circle cx="791.5" cy="58.2" r="5.8" fill="#3ab03a" stroke="#208a20" stroke-width="1"/><path d="M789.5 55v6.5l5-3.25z" fill="#fff"/></svg>
<div class="t " style="left:801.9px;top:54.19px;font-size:11px;line-height:11px;color:#111">Go</div>
<div class="inp" style="left:825px;top:48.3px;width:140px;height:20px;border-color:#8a8a8a;border-radius:3px"></div>
<svg style="left:828px;top:50px" width="18" height="17" viewBox="828 50 18 17"><rect x="829.5" y="51.5" width="13" height="13" fill="#e8eefc" stroke="#6a8ac8" stroke-width=".8"/><path d="M840 54a5 5 0 1 0 0.5 7v-2.5h-3" fill="none" stroke="#2040a0" stroke-width="1.3"/><path d="M841 62h5l-2.5 3z" fill="#111"/></svg>
<div class="a" style="left:438px;top:72.5px;width:522px;height:1px;background:#c4c4c4"></div>
<div class="a" style="left:438px;top:73.5px;width:522px;height:1px;background:#fafafa"></div>
<svg style="left:437px;top:79px" width="15" height="13" viewBox="437 79 15 13"><path d="M439.0 82.5v7.5h11v-6.5h-6l-1-1.5h-3.5z" fill="#f4e48a" stroke="#b8a050" stroke-width="1"/><path d="M439.0 90l1-5.5h10.5l-1 5.5" fill="#fff2a8" stroke="#b8a050" stroke-width=".8"/></svg>
<div class="t " style="left:453.7px;top:81.29px;font-size:11px;line-height:11px;color:#111">SUSE Linux</div>
<svg style="left:520px;top:79px" width="15" height="13" viewBox="520 79 15 13"><path d="M521.9 82.5v7.5h11v-6.5h-6l-1-1.5h-3.5z" fill="#f4e48a" stroke="#b8a050" stroke-width="1"/><path d="M521.9 90l1-5.5h10.5l-1 5.5" fill="#fff2a8" stroke="#b8a050" stroke-width=".8"/></svg>
<div class="t " style="left:537px;top:81.29px;font-size:11px;line-height:11px;color:#111">News</div>
<svg style="left:571px;top:79px" width="15" height="13" viewBox="571 79 15 13"><path d="M573.0 82.5v7.5h11v-6.5h-6l-1-1.5h-3.5z" fill="#f4e48a" stroke="#b8a050" stroke-width="1"/><path d="M573.0 90l1-5.5h10.5l-1 5.5" fill="#fff2a8" stroke="#b8a050" stroke-width=".8"/></svg>
<div class="t " style="left:587.7px;top:81.29px;font-size:11px;line-height:11px;color:#111">Reference</div>
<svg style="left:647px;top:79px" width="15" height="13" viewBox="647 79 15 13"><path d="M649.25 82.5v7.5h11v-6.5h-6l-1-1.5h-3.5z" fill="#f4e48a" stroke="#b8a050" stroke-width="1"/><path d="M649.25 90l1-5.5h10.5l-1 5.5" fill="#fff2a8" stroke="#b8a050" stroke-width=".8"/></svg>
<div class="t " style="left:665px;top:81.29px;font-size:11px;line-height:11px;color:#111">Maps and Directions</div>
<svg style="left:773px;top:79px" width="15" height="13" viewBox="773 79 15 13"><path d="M775.3 82.5v7.5h11v-6.5h-6l-1-1.5h-3.5z" fill="#f4e48a" stroke="#b8a050" stroke-width="1"/><path d="M775.3 90l1-5.5h10.5l-1 5.5" fill="#fff2a8" stroke="#b8a050" stroke-width=".8"/></svg>
<div class="t " style="left:790.4px;top:81.29px;font-size:11px;line-height:11px;color:#111">Shopping</div>
<svg style="left:847px;top:79px" width="14" height="14" viewBox="847 79 14 14"><path d="M848.5 80.5h6.5l2.5 2.5v8.8h-9z" fill="#e8eefa" stroke="#9aa6c0" stroke-width="1"/></svg>
<div class="t " style="left:862.5px;top:81.29px;font-size:11px;line-height:11px;color:#111">Rss</div>
<div class="t " style="left:953.5px;top:80.69px;font-size:11px;line-height:11px;color:#111;font-weight:bold">»</div>
<div class="a" style="left:438px;top:97px;width:522px;height:1px;background:#c8c8c8"></div>
<div class="a" style="left:438px;top:98px;width:522px;height:537px;background:#fff;overflow:hidden">
<svg width="522" height="537" viewBox="438 98 522 537" style="left:0;top:0">
<defs>
<linearGradient id="g2" gradientUnits="userSpaceOnUse" x1="436" y1="0" x2="698" y2="0">
<stop offset="0" stop-color="#1414b4"/><stop offset="1" stop-color="#eeeef8"/></linearGradient>
<filter id="bl" x="-10%" y="-10%" width="120%" height="120%"><feGaussianBlur stdDeviation="2.1"/></filter>
<clipPath id="cp"><rect x="380" y="105" width="700" height="498"/></clipPath>
<g id="fpent"><polygon points="567.0,107.77 693.09,203.18 644.68,348.4 490.29,348.4 440.92,203.16" fill="url(#g2)" stroke="#1212c2" stroke-width="9.6"/></g>
<g id="fpair"><use href="#fpent"/><use href="#fpent" transform="translate(0,706) scale(1,-1)"/></g>
</defs>
<g clip-path="url(#cp)"><g filter="url(#bl)"><use href="#fpair"/><use href="#fpair" transform="translate(263,0)"/><rect x="486" y="343.5" width="163" height="19" fill="#0000c0"/><rect x="749" y="343.5" width="163" height="19" fill="#0000c0"/></g></g>
</svg>
</div>
</body></html>
